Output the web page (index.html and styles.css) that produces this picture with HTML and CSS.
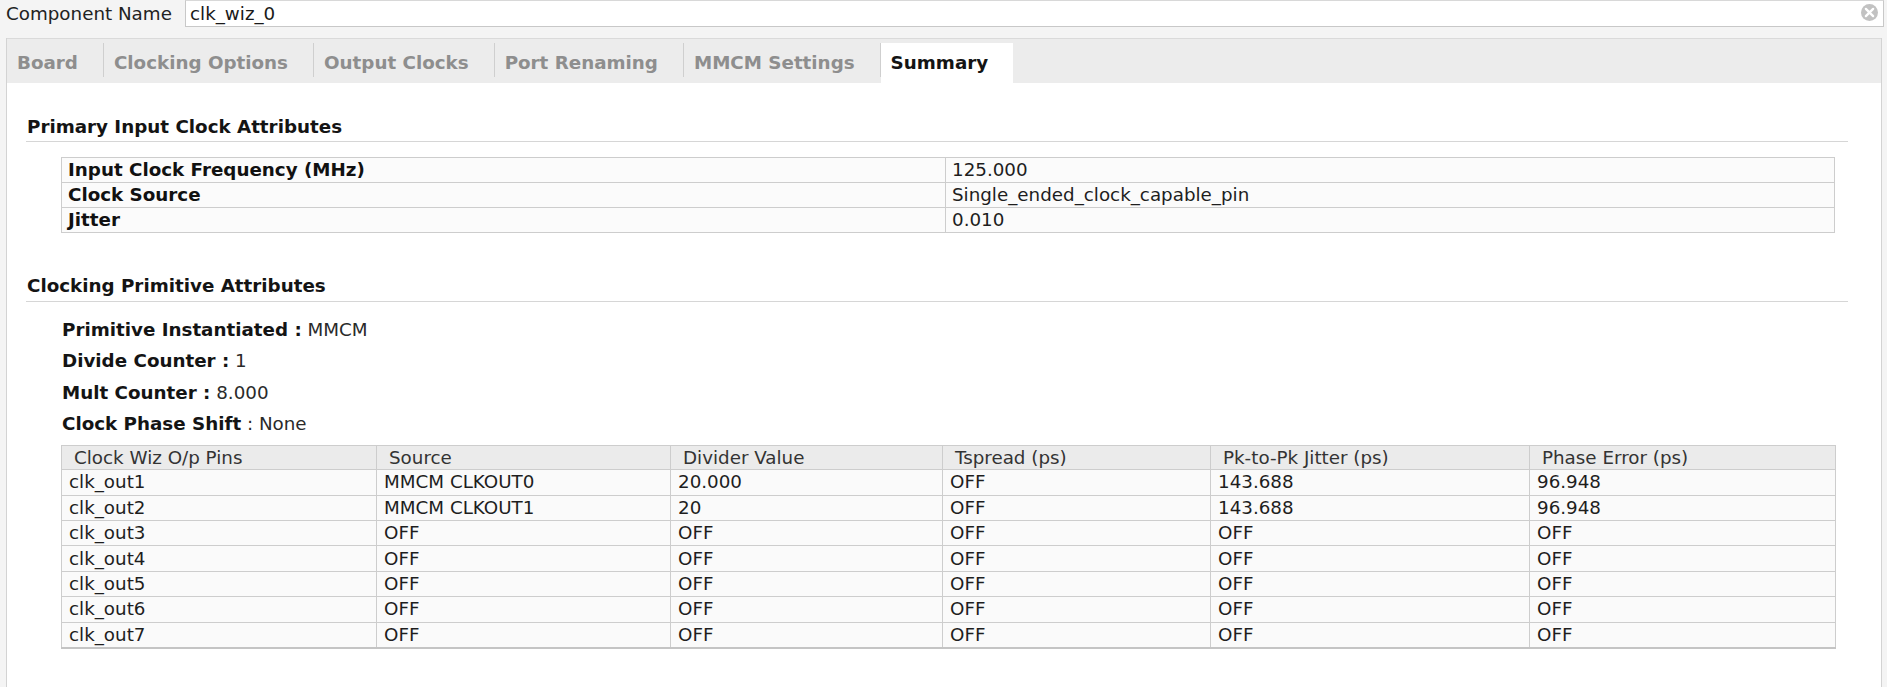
FILE: index.html
```html
<!DOCTYPE html>
<html>
<head>
<meta charset="utf-8">
<title>clk_wiz_0 Summary</title>
<link rel="stylesheet" href="styles.css">
</head>
<body>
<div class="top">
  <span class="top-label">Component Name</span>
  <div class="field">
    <span class="field-text">clk_wiz_0</span>
    <svg class="clear" width="17" height="17" viewBox="0 0 16 16">
      <circle cx="8" cy="8" r="8" fill="#c2c2c2"/>
      <path d="M4.6 4.6 L11.4 11.4 M11.4 4.6 L4.6 11.4" stroke="#fff" stroke-width="2.2" stroke-linecap="round"/>
    </svg>
  </div>
</div>
<div class="tabpane">
  <div class="tabs">
    <div class="tab">Board</div>
    <div class="tab">Clocking Options</div>
    <div class="tab">Output Clocks</div>
    <div class="tab">Port Renaming</div>
    <div class="tab">MMCM Settings</div>
    <div class="tab active">Summary</div>
  </div>
  <div class="content">
    <div class="section-title first">Primary Input Clock Attributes</div>
    <table class="kv">
      <colgroup><col class="kv-c1"><col></colgroup>
      <tr><td class="key">Input Clock Frequency (MHz)</td><td>125.000</td></tr>
      <tr><td class="key">Clock Source</td><td>Single_ended_clock_capable_pin</td></tr>
      <tr><td class="key">Jitter</td><td>0.010</td></tr>
    </table>
    <div class="section-title second">Clocking Primitive Attributes</div>
    <div class="attrs">
      <div class="attr"><span class="attr-key">Primitive Instantiated :</span> MMCM</div>
      <div class="attr"><span class="attr-key">Divide Counter :</span> 1</div>
      <div class="attr"><span class="attr-key">Mult Counter :</span> 8.000</div>
      <div class="attr"><span class="attr-key">Clock Phase Shift</span> : None</div>
    </div>
    <table class="grid">
      <colgroup>
        <col class="g1"><col class="g2"><col class="g3"><col class="g4"><col class="g5"><col class="g6">
      </colgroup>
      <thead>
        <tr><th>Clock Wiz O/p Pins</th><th>Source</th><th>Divider Value</th><th>Tspread (ps)</th><th>Pk-to-Pk Jitter (ps)</th><th>Phase Error (ps)</th></tr>
      </thead>
      <tbody>
        <tr><td>clk_out1</td><td>MMCM CLKOUT0</td><td>20.000</td><td>OFF</td><td>143.688</td><td>96.948</td></tr>
        <tr><td>clk_out2</td><td>MMCM CLKOUT1</td><td>20</td><td>OFF</td><td>143.688</td><td>96.948</td></tr>
        <tr><td>clk_out3</td><td>OFF</td><td>OFF</td><td>OFF</td><td>OFF</td><td>OFF</td></tr>
        <tr><td>clk_out4</td><td>OFF</td><td>OFF</td><td>OFF</td><td>OFF</td><td>OFF</td></tr>
        <tr><td>clk_out5</td><td>OFF</td><td>OFF</td><td>OFF</td><td>OFF</td><td>OFF</td></tr>
        <tr><td>clk_out6</td><td>OFF</td><td>OFF</td><td>OFF</td><td>OFF</td><td>OFF</td></tr>
        <tr><td>clk_out7</td><td>OFF</td><td>OFF</td><td>OFF</td><td>OFF</td><td>OFF</td></tr>
      </tbody>
    </table>
  </div>
</div>
</body>
</html>
```
FILE: styles.css
```css
html, body {
  margin: 0;
  padding: 0;
}
body {
  width: 1887px;
  height: 687px;
  overflow: hidden;
  background: #f4f4f4;
  font-family: "DejaVu Sans", sans-serif;
  font-size: 18.3px;
  color: #1c1c1c;
}
.top {
  display: flex;
  align-items: center;
  height: 27px;
}
.top-label {
  width: 179px;
  padding-left: 6px;
  line-height: 24px;
  color: #222;
}
.field {
  flex: 1;
  margin-right: 3px;
  height: 27px;
  box-sizing: border-box;
  border: 1px solid #c8c8c8;
  border-top-color: #d8d8d8;
  background: #fff;
  display: flex;
  align-items: center;
  padding-left: 4px;
}
.field-text {
  line-height: 24px;
  color: #1a1a1a;
}
.clear {
  margin-left: auto;
  margin-right: 5px;
  margin-bottom: 3px;
  display: block;
}
.tabpane {
  margin: 11px 5px 0 6px;
  border-left: 1px solid #d3d3d3;
  border-right: 1px solid #d3d3d3;
  height: 649px;
  display: flex;
  flex-direction: column;
}
.tabs {
  display: flex;
  align-items: flex-end;
  height: 45px;
  box-sizing: border-box;
  background: #ececec;
  border-top: 1px solid #dadada;
}
.tab {
  padding: 3px 25px 0 10px;
  height: 31px;
  line-height: 34px;
  margin-bottom: 6px;
  border-right: 1px solid #cfcfcf;
  color: #8e8e8e;
  font-weight: bold;
  white-space: nowrap;
}
.tab.active {
  background: #fff;
  color: #141414;
  border-right: none;
  margin-bottom: 0;
  padding-bottom: 6px;
}
.content {
  flex: 1;
  background: #fff;
  padding: 0 33px 0 19px;
}
.section-title {
  font-weight: bold;
  line-height: 22px;
  padding: 0 0 4px 1px;
  border-bottom: 1px solid #d6d6d6;
  color: #141414;
}
.section-title.first {
  margin-top: 33px;
  padding-bottom: 3px;
}
.section-title.second {
  margin-top: 42px;
}
.kv {
  margin: 15px 12px 0 35px;
  width: 1774px;
  border-collapse: collapse;
  table-layout: fixed;
  border: 1px solid #c2c2c2;
}
.kv-c1 {
  width: 884px;
}
.kv td {
  height: 24px;
  line-height: 22px;
  padding: 0 6px;
  border: 1px solid #cdcdcd;
  background: #fbfbfb;
  color: #1e1e1e;
  white-space: nowrap;
}
.kv td.key {
  font-weight: bold;
  color: #111;
}
.attrs {
  margin: 12px 0 0 36px;
}
.attr {
  line-height: 31.3px;
  color: #2a2a2a;
}
.attr-key {
  font-weight: bold;
  color: #141414;
}
.grid {
  margin: 6px 12px 0 35px;
  width: 1774px;
  border-collapse: collapse;
  table-layout: fixed;
  border: 1px solid #bdbdbd;
  border-bottom: 2px solid #c4c4c4;
}
.g1 { width: 315px; }
.g2 { width: 294px; }
.g3 { width: 272px; }
.g4 { width: 268px; }
.g5 { width: 319px; }
.g6 { width: 306px; }
.grid th {
  height: 23px;
  line-height: 22px;
  padding: 0 0 0 12px;
  text-align: left;
  font-weight: normal;
  background: #ebebeb;
  color: #333;
  border: 1px solid #cdcdcd;
  white-space: nowrap;
}
.grid td {
  height: 24.4px;
  line-height: 22px;
  padding: 0 0 0 7px;
  background: #fafafa;
  color: #1e1e1e;
  border: 1px solid #cdcdcd;
  white-space: nowrap;
}
```
